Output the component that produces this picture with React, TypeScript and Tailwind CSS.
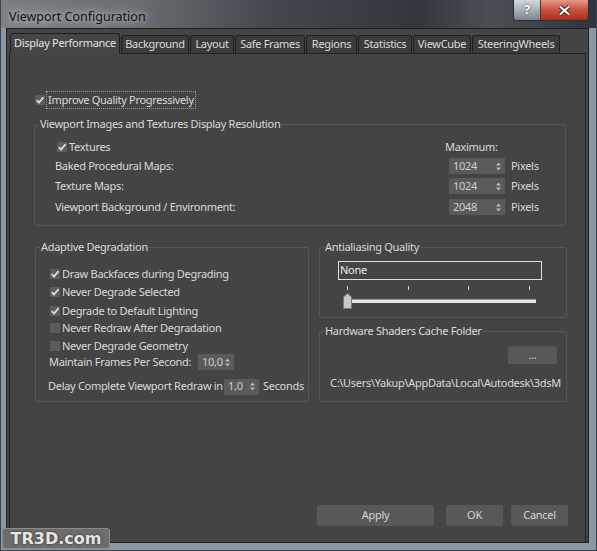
import React from 'react';

const font = "font-['Noto_Sans',sans-serif]";

const Check = ({ checked }: { checked: boolean }) => (
  <div className="w-[10px] h-[10px] bg-[#5c5c5c] flex items-center justify-center shrink-0">
    {checked && (
      <svg width="10" height="10" viewBox="0 0 10 10">
        <path d="M1.8 5.2 L4 7.6 L8.6 2.2" stroke="#dcdcdc" strokeWidth="1.8" fill="none" />
      </svg>
    )}
  </div>
);

const CheckRow = ({ label, checked = true, className = '' }: { label: string; checked?: boolean; className?: string }) => (
  <div className={`flex items-center gap-[2px] h-[16px] ${className}`}>
    <Check checked={checked} />
    <span className="whitespace-nowrap">{label}</span>
  </div>
);

const Spinner = ({ value, w }: { value: string; w: string }) => (
  <div className={`${w} h-[16px] bg-[#5a5a5a] flex items-center justify-between pl-[4px] pr-[4px] text-[#cfcfcf] shrink-0`}>
    <span>{value}</span>
    <svg width="5" height="9" viewBox="0 0 5 9">
      <path d="M2.5 0.5 L5 3.5 L0 3.5 Z" fill="#b8b8b8" />
      <path d="M2.5 8.5 L5 5.5 L0 5.5 Z" fill="#b8b8b8" />
    </svg>
  </div>
);

const Group = ({
  title,
  className = '',
  inner = '',
  children,
}: {
  title: string;
  className?: string;
  inner?: string;
  children: React.ReactNode;
}) => (
  <fieldset className={`border border-[#585858] rounded-[3px] ${className}`}>
    <legend className="ml-[4px] px-[1px] leading-[14px]">{title}</legend>
    <div className={inner}>{children}</div>
  </fieldset>
);

const tabs = [
  { name: 'Display Performance', w: 'w-[110px]' },
  { name: 'Background', w: 'w-[68px]' },
  { name: 'Layout', w: 'w-[44px]' },
  { name: 'Safe Frames', w: 'w-[70px]' },
  { name: 'Regions', w: 'w-[51px]' },
  { name: 'Statistics', w: 'w-[54px]' },
  { name: 'ViewCube', w: 'w-[58px]' },
  { name: 'SteeringWheels', w: 'w-[88px]' },
];

export default function App() {
  return (
    <div className={`w-[597px] h-[551px] relative overflow-hidden flex flex-col bg-[#8b97a3] border-x border-b border-[#3a444e] text-[11px] tracking-[-0.3px] text-[#dadada] ${font}`}>
      {/* Title bar */}
      <div className="h-[28px] shrink-0 flex justify-between items-start bg-[linear-gradient(90deg,#7c8085_0%,#6a6e73_22%,#44484e_45%,#33373d_70%,#4a4e55_82%,#2f333a_100%)] -mx-px">
        <div className="pl-[9px] pt-[8px] text-[12.5px] tracking-normal text-[#111] [text-shadow:0_0_6px_#c9ccd0,0_0_12px_#b9bcc0]">
          Viewport Configuration
        </div>
        <div className="flex mr-[8px] border border-t-0 border-[#2a2d31] rounded-b-[4px] overflow-hidden">
          <div className="w-[27px] h-[20px] flex items-center justify-center bg-[linear-gradient(180deg,#d4d8dc_0%,#a9b0b7_50%,#7b838b_100%)] border-r border-[#3a3f45] text-white font-bold text-[13px] [text-shadow:0_0_2px_#333]">
            ?
          </div>
          <div className="w-[47px] h-[20px] flex items-center justify-center bg-[linear-gradient(180deg,#e59a8c_0%,#c9503c_50%,#a8301f_100%)]">
            <svg width="13" height="11" viewBox="0 0 13 11">
              <path d="M2 1.5 L11 9.5 M11 1.5 L2 9.5" stroke="#4a1a12" strokeWidth="4" />
              <path d="M2 1.5 L11 9.5 M11 1.5 L2 9.5" stroke="#ffffff" strokeWidth="2.2" />
            </svg>
          </div>
        </div>
      </div>

      {/* Body */}
      <div className="flex-1 flex pl-[5px] pr-[7px] pb-[7px]">
        <div className="flex-1 flex flex-col bg-[#444444] border border-[#1c2025]">
          {/* Tabs */}
          <div className="h-[24px] flex items-end gap-[1px] ml-[3px] relative z-10">
            {tabs.map((t, i) =>
              i === 0 ? (
                <div
                  key={t.name}
                  className={`${t.w} h-[21px] -mb-px bg-[#454545] border border-b-0 border-[#1e1e1e] rounded-t-[3px] flex items-center justify-center text-[#e4e4e4] pb-[1px]`}
                >
                  {t.name}
                </div>
              ) : (
                <div
                  key={t.name}
                  className={`${t.w} h-[18px] bg-[#3b3b3b] border border-b-0 border-[#1e1e1e] rounded-t-[3px] flex items-center justify-center text-[#dcdcdc]`}
                >
                  {t.name}
                </div>
              )
            )}
          </div>

          {/* Panel */}
          <div className="flex-1 flex flex-col ml-[2px] mr-[2px] border-t border-x border-[#222222] pl-[24px] pr-[17px] pt-[37px] pb-[16px]">
            <div className="ml-[1px] flex items-center gap-[1px] h-[18px]">
              <Check checked />
              <span className="border border-dotted border-[#9a9a9a] px-[1px] leading-[16px]">
                Improve Quality Progressively
              </span>
            </div>

            <Group
              title="Viewport Images and Textures Display Resolution"
              className="mt-[8px] w-[532px]"
              inner="pl-[20px] pt-[8px] pb-[10px]"
            >
              <div className="flex items-center h-[16px]">
                <div className="w-[390px]">
                  <CheckRow label="Textures" className="ml-[2px]" />
                </div>
                <span>Maximum:</span>
              </div>
              {[
                ['Baked Procedural Maps:', '1024', 'mt-[3px]'],
                ['Texture Maps:', '1024', 'mt-[4px]'],
                ['Viewport Background / Environment:', '2048', 'mt-[5px]'],
              ].map(([label, v, mt]) => (
                <div key={label} className={`flex items-center h-[16px] ${mt}`}>
                  <div className="w-[394px] whitespace-nowrap">{label}</div>
                  <Spinner value={v} w="w-[56px]" />
                  <span className="ml-[6px]">Pixels</span>
                </div>
              ))}
            </Group>

            <div className="flex mt-[14px]">
              <Group title="Adaptive Degradation" className="ml-[1px] w-[274px]" inner="pl-[14px] pt-[12px] pb-[6px]">
                <CheckRow label="Draw Backfaces during Degrading" />
                <CheckRow label="Never Degrade Selected" className="mt-[2px]" />
                <CheckRow label="Degrade to Default Lighting" className="mt-[3px]" />
                <CheckRow label="Never Redraw After Degradation" checked={false} className="mt-[1px]" />
                <CheckRow label="Never Degrade Geometry" checked={false} className="mt-[2px]" />
                <div className="flex items-center h-[16px] -ml-[1px]">
                  <div className="w-[149px] whitespace-nowrap">Maintain Frames Per Second:</div>
                  <Spinner value="10,0" w="w-[36px]" />
                </div>
                <div className="flex items-center h-[17px] mt-[8px] -ml-[2px]">
                  <div className="w-[176px] whitespace-nowrap">Delay Complete Viewport Redraw in</div>
                  <Spinner value="1,0" w="w-[35px]" />
                  <span className="ml-[4px]">Seconds</span>
                </div>
              </Group>

              <div className="ml-[10px] flex flex-col">
                <Group title="Antialiasing Quality" className="w-[248px]" inner="pl-[18px] pt-[7px] pb-[8px]">
                  <div className="w-[204px] h-[19px] border border-[#dedede] text-[#eeeeee] pl-[1px] leading-[16px]">None</div>
                  <div className="w-[183px] h-[5px] mt-[6px] ml-[9px] flex justify-between">
                    {[0, 1, 2, 3].map((i) => (
                      <div key={i} className="w-px h-[4px] bg-[#d8d8d8]" />
                    ))}
                  </div>
                  <div className="flex items-center mt-[2px] ml-[5px] h-[16px]">
                    <svg width="9" height="16" viewBox="0 0 9 16" className="shrink-0">
                      <path d="M0.5 15.5 L0.5 4 L4.5 0.5 L8.5 4 L8.5 15.5 Z" fill="#c8c8c8" stroke="#7a7a7a" />
                    </svg>
                    <div className="w-[184px] h-[4px] bg-[#e4e4e4] border-t border-[#9a9a9a]" />
                  </div>
                </Group>

                <Group title="Hardware Shaders Cache Folder" className="mt-[6px] w-[248px]" inner="pt-[8px] pb-[9px]">
                  <div className="flex justify-end pr-[9px]">
                    <div className="w-[49px] h-[18px] bg-[#585858] rounded-[2px] flex items-center justify-center text-[#cfcfcf]">...</div>
                  </div>
                  <div className="ml-[10px] mt-[11px] whitespace-nowrap">
                    C:\Users\Yakup\AppData\Local\Autodesk\3dsM
                  </div>
                </Group>
              </div>
            </div>

            <div className="mt-auto flex justify-end items-center">
              <div className="w-[117px] h-[21px] bg-[#585858] rounded-[2px] flex items-center justify-center text-[#d6d6d6]">Apply</div>
              <div className="w-[57px] h-[21px] ml-[12px] bg-[#585858] rounded-[2px] flex items-center justify-center text-[#d6d6d6]">OK</div>
              <div className="w-[57px] h-[21px] ml-[8px] bg-[#585858] rounded-[2px] flex items-center justify-center text-[#d6d6d6]">Cancel</div>
            </div>
          </div>
        </div>
      </div>

      {/* Watermark */}
      <div className="absolute left-[1px] bottom-[1px] w-[108px] h-[21px] bg-[#6c6c6c] border border-[#8c8c8c] rounded-[3px] flex items-center justify-center font-['DejaVu_Sans',sans-serif] font-bold text-[16px] tracking-normal text-[#e6e6e6] [text-shadow:0_0_2px_#222]">
        TR3D.com
      </div>
    </div>
  );
}
